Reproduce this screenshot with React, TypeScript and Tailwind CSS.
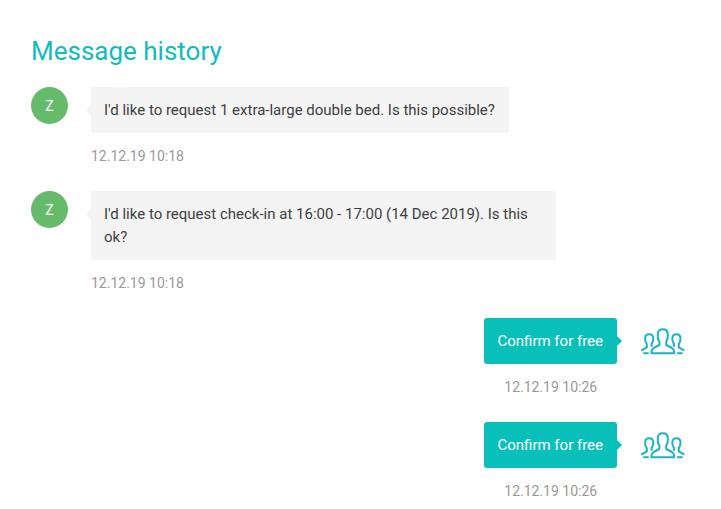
type Message = {
  id: number;
  from: "guest" | "host";
  text: string;
  time: string;
};

const messages: Message[] = [
  { id: 1, from: "guest", text: "I'd like to request 1 extra-large double bed. Is this possible?", time: "12.12.19 10:18" },
  { id: 2, from: "guest", text: "I'd like to request check-in at 16:00 - 17:00 (14 Dec 2019). Is this ok?", time: "12.12.19 10:18" },
  { id: 3, from: "host", text: "Confirm for free", time: "12.12.19 10:26" },
  { id: 4, from: "host", text: "Confirm for free", time: "12.12.19 10:26" },
];

function GroupIcon() {
  return (
    <svg
      aria-hidden="true"
      className="mt-[10px] h-[27px] w-[44px] shrink-0"
      viewBox="0 0 44 27"
      fill="none"
      stroke="#1cb4c4"
      strokeWidth="2"
      strokeLinecap="round"
      strokeLinejoin="round"
    >
      <path d="M18.4 17V13.6C17.2 12 16.8 10.6 16.8 8.6V6C16.8 2.8 18.6 1.2 21.8 1.2S26.8 2.8 26.8 6V8.6C26.8 10.6 26.4 12 25.2 13.6V17L31 20C32.6 20.9 33.2 22.4 33.2 25.2H10.4C10.4 22.4 11 20.9 12.6 20Z" />
      <path d="M1 22.2L5.8 19.4V16C4.8 14.6 4.2 13.4 4.2 11.6V10C4.2 7.6 5.6 6.2 8.2 6.2S12.2 7.6 12.2 10V11.6C12.2 13.4 11.6 14.6 10.6 16V18" />
      <path d="M42.6 22.2L37.8 19.4V16C38.8 14.6 39.4 13.4 39.4 11.6V10C39.4 7.6 38 6.2 35.4 6.2S31.4 7.6 31.4 10V11.6C31.4 13.4 32 14.6 33 16V18" />
      <path d="M3 25.2H7M36.8 25.2H40.8" />
    </svg>
  );
}

function GuestMessage({ message }: { message: Message }) {
  return (
    <li className="flex items-start gap-[23px]">
      <span className="flex size-[37px] shrink-0 items-center justify-center rounded-full bg-[#66bb6a] text-sm text-white">
        Z
      </span>
      <div className="max-w-[465px]">
        <p className="relative w-fit rounded-[3px] bg-[#f4f4f4] pt-3 pr-[14px] pb-[11px] pl-[13px] text-[#404040]">
          <span className="absolute top-[18px] -left-[5px] border-y-[5px] border-r-[5px] border-y-transparent border-r-[#f4f4f4]" />
          {message.text}
        </p>
        <time className="mt-3 block text-sm leading-[23px] text-[#999999]">{message.time}</time>
      </div>
    </li>
  );
}

function HostMessage({ message }: { message: Message }) {
  return (
    <li className="flex items-start justify-end gap-6">
      <div>
        <p className="relative rounded-[3px] bg-[#09bfba] pt-3 pr-[14px] pb-[11px] pl-[13px] text-white">
          <span className="absolute top-[18px] -right-[5px] border-y-[5px] border-l-[5px] border-y-transparent border-l-[#09bfba]" />
          {message.text}
        </p>
        <time className="mt-3 block text-center text-sm leading-[23px] text-[#999999]">{message.time}</time>
      </div>
      <GroupIcon />
    </li>
  );
}

export default function App() {
  return (
    <main className="min-h-screen bg-white pt-[34px] pr-9 pb-1 pl-[31px] font-['Roboto',sans-serif] text-[15px] leading-[23px]">
      <h1 className="text-[26px] leading-[34px] text-[#12bcb8]">Message history</h1>
      <ul className="mt-[19px] flex flex-col gap-[23px]">
        {messages.map((message) =>
          message.from === "guest" ? (
            <GuestMessage key={message.id} message={message} />
          ) : (
            <HostMessage key={message.id} message={message} />
          ),
        )}
      </ul>
    </main>
  );
}
